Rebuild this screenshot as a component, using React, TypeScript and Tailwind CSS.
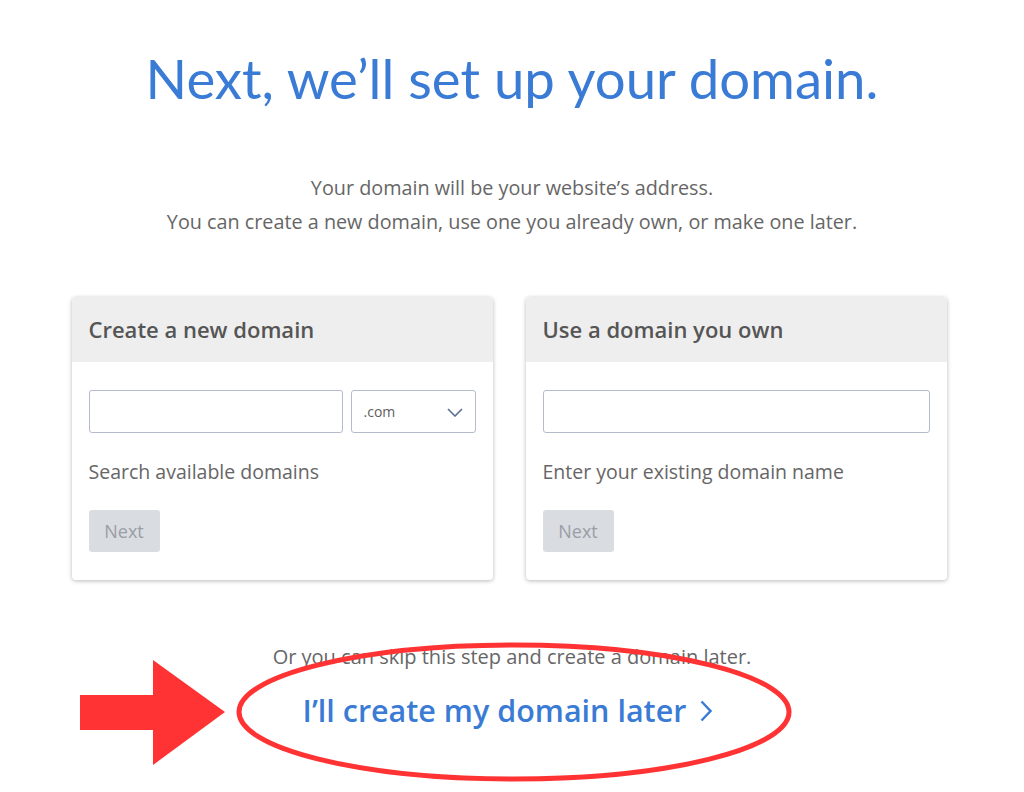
const DomainCard = ({
  title,
  hint,
  withSelect,
}: {
  title: string;
  hint: string;
  withSelect?: boolean;
}) => {
  return (
    <div className="w-[421px] h-[283px] bg-white rounded-[4px] shadow-[0_1px_4px_rgba(0,0,0,0.28)] overflow-hidden">
      <div className="h-[65px] bg-[#eeeeee] flex items-center px-[17px]">
        <h2 className="text-[22px] font-semibold text-[#555555]">{title}</h2>
      </div>
      <div className="px-[17px] pt-[28px]">
        <div className="flex gap-[8px]">
          <div className="flex-1 h-[43px] border border-[#b4bccb] rounded-[3px]" />
          {withSelect && (
            <div className="w-[125px] h-[43px] border border-[#b4bccb] rounded-[3px] flex items-center justify-between pl-[12px] pr-[12px]">
              <span className="text-[14px] text-[#5e5e5e]">.com</span>
              <svg width="16" height="9" viewBox="0 0 16 9" className="mt-[2px]">
                <polyline points="1,1 8,8 15,1" fill="none" stroke="#5a6f94" strokeWidth="1.6" />
              </svg>
            </div>
          )}
        </div>
        <p className="mt-[26px] text-[19.5px] text-[#666666] leading-[26px]">{hint}</p>
        <div className="mt-[25px] w-[71px] h-[42px] bg-[#d9dce1] rounded-[3px] flex items-center justify-center text-[18px] text-[#9a9ea6]">
          Next
        </div>
      </div>
    </div>
  );
};

export default function App() {
  return (
    <div
      className="relative w-[1024px] h-[792px] bg-white overflow-hidden"
      style={{ fontFamily: "'Open Sans', sans-serif" }}
    >
      <div className="flex flex-col items-center">
        <h1
          className="mt-[44px] text-[54.5px] leading-[68px] text-[#3a7bd5]"
          style={{ fontFamily: "Lato, sans-serif" }}
        >
          Next, we’ll set up your domain.
        </h1>
        <div className="mt-[59px] text-center text-[19.8px] leading-[34px] text-[#666666]">
          <p>Your domain will be your website’s address.</p>
          <p>You can create a new domain, use one you already own, or make one later.</p>
        </div>
        <div className="mt-[58px] flex gap-[33px] ml-[-6px]">
          <DomainCard title="Create a new domain" hint="Search available domains" withSelect />
          <DomainCard title="Use a domain you own" hint="Enter your existing domain name" />
        </div>
        <p className="mt-[64px] text-[20px] text-[#666666] leading-[26px]">
          Or you can skip this step and create a domain later.
        </p>
        <a className="mt-[20px] ml-[-9px] flex items-center gap-[14px] text-[30.5px] font-semibold text-[#3a7bd5] leading-[40px]">
          I’ll create my domain later
          <svg width="12" height="22" viewBox="0 0 12 22" className="mt-[2px]">
            <polyline points="1.5,1.5 10.5,11 1.5,20.5" fill="none" stroke="#3a7bd5" strokeWidth="2.4" />
          </svg>
        </a>
      </div>

      <svg className="absolute left-0 top-0 pointer-events-none" width="1024" height="792">
        <ellipse cx="514" cy="712" rx="275" ry="67" fill="none" stroke="#ff3333" strokeWidth="5" />
        <polygon points="80,695 153,695 153,660 225,712 153,765 153,730 80,730" fill="#ff3333" />
      </svg>
    </div>
  );
}
